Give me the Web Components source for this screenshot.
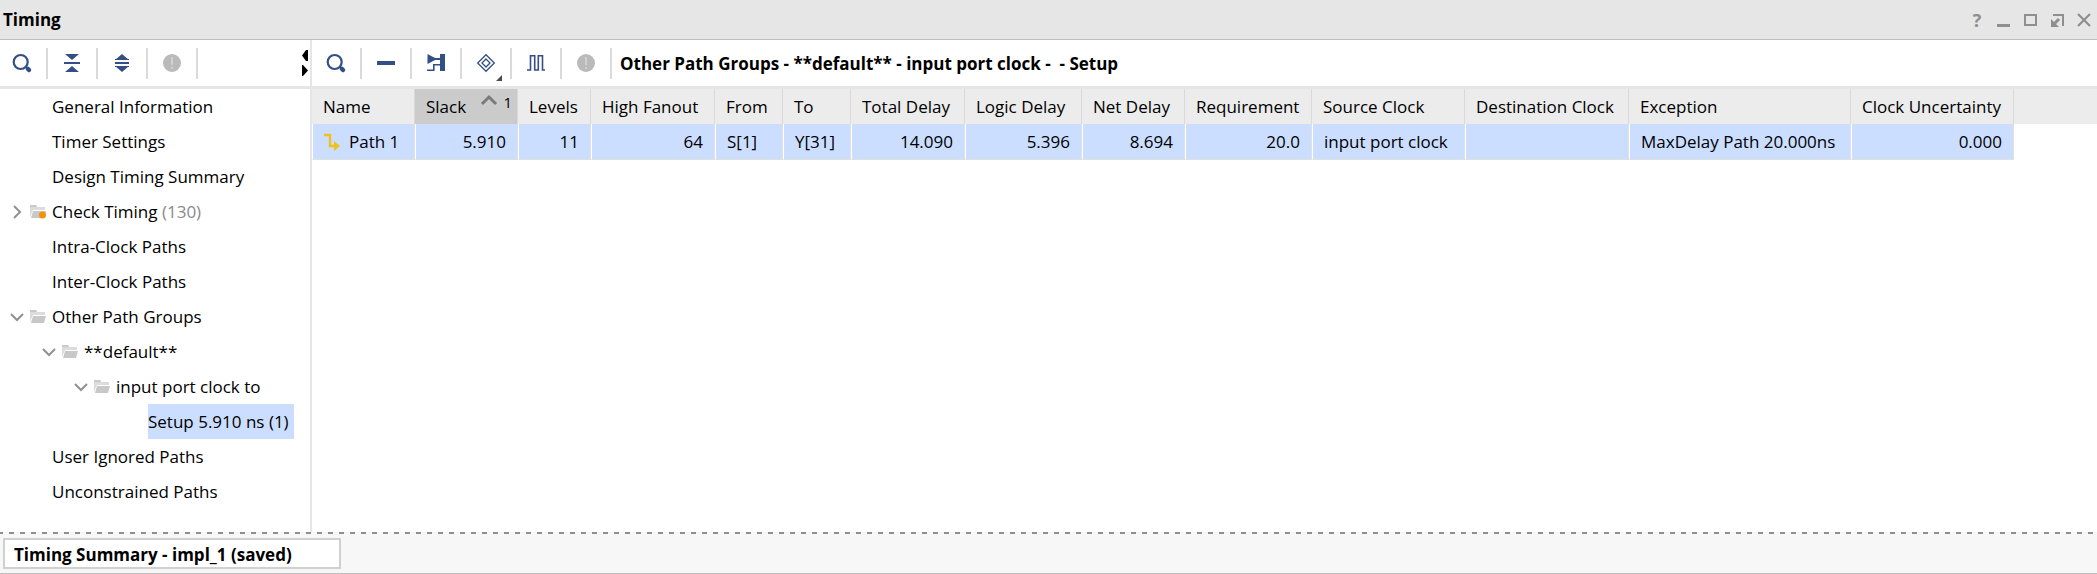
<!DOCTYPE html>
<html lang="en">
<head>
<meta charset="utf-8">
<title>Timing</title>
<style>
  body { margin: 0; background: #fff; color: #000; font: 17px/24px "Open Sans", "Noto Sans", sans-serif; }
</style>
</head>
<body>
<timing-window></timing-window>

<script>
const ICONS = {
  search: '<svg width="20" height="20" viewBox="0 0 20 20"><circle cx="8.700" cy="9" r="7" fill="none" stroke="#334f85" stroke-width="2.200"/><path d="M13.500 13.500l2 2" stroke="#334f85" stroke-width="2"/><path d="M16 16l1 1" stroke="#334f85" stroke-width="4.500" stroke-linecap="round"/></svg>',
  collapse: '<svg width="18" height="20" viewBox="0 0 18 20"><path d="M2 1h14L9 7zM2 19h14l-7-6z" fill="#334f85"/><path d="M1 9h16v2H1z" fill="#334f85"/></svg>',
  expand: '<svg width="18" height="20" viewBox="0 0 18 20"><path d="M2 7l7-6 7 6zM2 13l7 6 7-6z" fill="#334f85"/><path d="M2 9h14v2H2z" fill="#334f85"/><path d="M2 6h14v1H2zM2 13h14v1H2z" fill="#334f85"/></svg>',
  info: '<svg width="20" height="20" viewBox="0 0 20 20"><circle cx="10" cy="10" r="9" fill="#bababa"/><path d="M9 4h2v8H9zM9 14h2v2H9z" fill="#d0d0d0"/></svg>',
  minus: '<svg width="20" height="20" viewBox="0 0 20 20"><path d="M1 8h18v4H1z" fill="#334f85"/></svg>',
  schematic: '<svg width="20" height="20" viewBox="0 0 20 20"><path d="M1.500 1v10L10 6.500V5.500z" fill="#334f85"/><path d="M14 1h5v17h-5z" fill="#334f85"/><path d="M8 6h7" stroke="#334f85" stroke-width="2"/><path d="M1 17.200h6.800v-5.400H14" fill="none" stroke="#334f85" stroke-width="1.600"/></svg>',
  target: '<svg width="20" height="20" viewBox="0 0 20 20" fill="none" stroke="#334f85" stroke-width="1.300"><path d="M10 1.700l8.300 8.300-8.300 8.300L1.700 10z"/><path d="M10 6l4 4-4 4-4-4z"/></svg>',
  wave: '<svg width="20" height="20" viewBox="0 0 20 20"><path d="M1 17h3.500V2.800h4.200V17h3.600V2.800h4.200V17H19" fill="none" stroke="#334f85" stroke-width="1.600"/></svg>',
  folder: '<svg width="16" height="16" viewBox="0 0 16 16"><path d="M0 13V1h6l1 2h8v3H3z" fill="#dcdcdc"/><path d="M3 7h13l-2 7H1z" fill="#c8c8c8"/><path d="M0 1h6l1 2H0z" fill="#c8c8c8"/></svg>',
  folderdot: '<svg width="16" height="16" viewBox="0 0 16 16"><path d="M0 13V1h6l1 2h8v3H3z" fill="#dcdcdc"/><path d="M3 7h13l-2 7H1z" fill="#c8c8c8"/><path d="M0 1h6l1 2H0z" fill="#c8c8c8"/><circle cx="12.500" cy="11" r="3.500" fill="#f79009"/></svg>',
  open: '<svg width="14" height="14" viewBox="0 0 14 14"><path d="M1 4l6 6 6-6" fill="none" stroke="#919191" stroke-width="2"/></svg>',
  closed: '<svg width="14" height="14" viewBox="0 0 14 14"><path d="M4 1l6 6-6 6" fill="none" stroke="#919191" stroke-width="2"/></svg>',
  path: '<svg width="16" height="16" viewBox="0 0 16 16"><path d="M0 1h6v11h6" fill="none" stroke="#eec21b" stroke-width="2.400"/><path d="M10 7l6 5-6 5z" fill="#eec21b"/></svg>',
  sort: '<svg width="16" height="10" viewBox="0 0 16 10"><path d="M1 9l7-7 7 7" fill="none" stroke="#7b7b7b" stroke-width="3"/></svg>',
  help: '<b>?</b>',
  minimize: '<svg width="14" height="14" viewBox="0 0 14 14"><path d="M0 11h13v3H0z" fill="#8f8f8f"/></svg>',
  maximize: '<svg width="14" height="14" viewBox="0 0 14 14"><path d="M1 2h11v10H1z" fill="none" stroke="#8f8f8f" stroke-width="2"/></svg>',
  float: '<svg width="14" height="14" viewBox="0 0 14 14"><path d="M2 2h10v11" fill="none" stroke="#8f8f8f" stroke-width="2"/><path d="M0 6v8h8z" fill="#8f8f8f"/><path d="M3 11l5-5" stroke="#8f8f8f" stroke-width="3"/></svg>',
  close: '<svg width="14" height="14" viewBox="0 0 14 14"><path d="M0 1l12 12M12 1L0 13" stroke="#8f8f8f" stroke-width="2.200"/></svg>'
};

function define(name, render) {
  customElements.define(name, class extends HTMLElement {
    connectedCallback() {
      if (!this.shadowRoot) this.attachShadow({ mode: "open" }).innerHTML = render(this);
    }
  });
}

define("app-icon", el => `
  <style>:host { display: inline-flex; flex: none; } svg { display: block; overflow: visible; }
  b { font-size: 18px; line-height: 14px; color: #8f8f8f; }</style>${ICONS[el.getAttribute("name")]}`);

define("tool-button", el => `
  <style>
    :host { display: block; flex: none; }
    button { position: relative; display: flex; align-items: center; justify-content: center; width: 50px; height: 31px;
      padding: 0; border: 0; border-right: 2px solid #dadada; background: none; }
    :host([edge]) button { width: 48px; padding-right: 2px; }
    :host([menu]) button::after { content: ""; position: absolute; right: 8px; bottom: -2px;
      border: 3px solid transparent; border-right-color: #4c4c4c; border-bottom-color: #4c4c4c; }
  </style>
  <button type="button" aria-label="${el.getAttribute("label")}"><app-icon name="${el.getAttribute("icon")}"></app-icon></button>`);

define("tool-bar", () => `
  <style>:host { display: flex; align-items: center; height: 46px; border-bottom: 3px solid #e6e6e6; }</style><slot></slot>`);

define("split-arrows", () => `
  <style>:host { display: flex; margin-left: auto; padding-right: 2px; } svg { display: block; }</style>
  <svg width="6" height="26" viewBox="0 0 6 26"><path d="M6 0v11H4L0 5.500 4 0zM0 15h1l5 5.500L1 26H0z"/></svg>`);

define("title-bar", el => `
  <style>
    :host { display: flex; align-items: center; height: 39px; padding: 0 5px 0 3px; background: #e6e6e6; border-bottom: 1px solid #bebebe; }
    h1 { margin: 0 auto 0 0; font: inherit; font-weight: 700; }
    div { display: flex; gap: 13px; }
    button { display: flex; align-items: center; justify-content: center; width: 14px; height: 14px; padding: 0; border: 0; background: none; font: inherit; }
  </style>
  <h1><slot></slot></h1>
  <div>${[["help", "Help"], ["minimize", "Minimize"], ["maximize", "Maximize"], ["float", "Float"], ["close", "Close"]]
    .map(([i, l]) => `<button type="button" aria-label="${l}"><app-icon name="${i}"></app-icon></button>`).join("")}</div>`);

define("tree-item", el => {
  const folder = el.getAttribute("folder");
  return `
  <style>
    :host { display: flex; align-items: center; height: 35px; padding-left: calc(10px + 32px * ${el.getAttribute("level") || 0}); white-space: pre; }
    .lead { display: flex; align-items: center; gap: 6px; width: 42px; flex: none; }
    .label { line-height: 35px; }
    :host([selected]) .label { background: #cbdeff; padding-right: 5px; }
    ::slotted(small) { font-size: inherit; color: #8a8a8a; }
  </style>
  <span class="lead">${folder ? `<app-icon name="${el.getAttribute("state")}"></app-icon><app-icon name="${folder}"></app-icon>` : ""}</span>
  <span class="label"><slot></slot></span>`;
});

define("report-tree", () => `
  <style>:host { display: block; }</style>
  <tree-item>General Information</tree-item>
  <tree-item>Timer Settings</tree-item>
  <tree-item>Design Timing Summary</tree-item>
  <tree-item folder="folderdot" state="closed">Check Timing <small>(130)</small></tree-item>
  <tree-item>Intra-Clock Paths</tree-item>
  <tree-item>Inter-Clock Paths</tree-item>
  <tree-item folder="folder" state="open">Other Path Groups</tree-item>
  <tree-item folder="folder" state="open" level="1">**default**</tree-item>
  <tree-item folder="folder" state="open" level="2">input port clock to</tree-item>
  <tree-item level="3" selected>Setup 5.910 ns (1)</tree-item>
  <tree-item>User Ignored Paths</tree-item>
  <tree-item>Unconstrained Paths</tree-item>`);

const COLUMNS = [
  ["Name", 103, "Path 1"], ["Slack", 103, "5.910", 1], ["Levels", 73, "11", 1], ["High Fanout", 124, "64", 1],
  ["From", 68, "S[1]"], ["To", 68, "Y[31]"], ["Total Delay", 114, "14.090", 1], ["Logic Delay", 117, "5.396", 1],
  ["Net Delay", 103, "8.694", 1], ["Requirement", 127, "20.0", 1], ["Source Clock", 153, "input port clock"],
  ["Destination Clock", 164, ""], ["Exception", 222, "MaxDelay Path 20.000ns"], ["Clock Uncertainty", 163, "0.000", 1]
];

define("path-table", () => `
  <style>
    :host { display: block; }
    table { width: 100%; table-layout: fixed; border-spacing: 0; font: inherit; }
    th, td { box-sizing: border-box; height: 35px; padding: 0 11px; text-align: left; font-weight: 400; white-space: nowrap; }
    th { background: #ececec; border-right: 1px solid #d9d9d9; padding-right: 0; }
    th:last-child { border: 0; }
    td { height: 36px; background: #cbdeff; border-left: 1px solid #fff; border-right: 1px solid #e0e0e0; border-bottom: 1px solid #e0e0e0; }
    td.num { text-align: right; }
    td:last-child { background: none; border: 0; }
    th.sorted { background: #cbcbcb; }
    .sort { display: flex; align-items: center; }
    .mark { display: flex; gap: 6px; margin: 0 5px 10px auto; font-size: 15px; line-height: 14px; }
    .path { display: flex; align-items: center; gap: 9px; }
  </style>
  <table>
    <colgroup>${COLUMNS.map(c => `<col style="width:${c[1]}px">`).join("")}<col></colgroup>
    <thead><tr>${COLUMNS.map(c => c[0] === "Slack"
      ? `<th class="sorted" aria-sort="ascending"><div class="sort">Slack<span class="mark"><app-icon name="sort"></app-icon>1</span></div></th>`
      : `<th>${c[0]}</th>`).join("")}<th></th></tr></thead>
    <tbody><tr>${COLUMNS.map((c, i) => i === 0
      ? `<td><div class="path"><app-icon name="path"></app-icon>${c[2]}</div></td>`
      : `<td${c[3] ? ' class="num"' : ""}>${c[2]}</td>`).join("")}<td></td></tr></tbody>
  </table>`);

define("result-tabs", () => `
  <style>
    :host { display: block; border-bottom: 1px solid #bebebe; background: #f7f7f7; }
    .dash { height: 2px; background: repeating-linear-gradient(90deg, #8f8f8f 0 3px, transparent 3px 9px, #8f8f8f 9px 11px); }
    .row { padding: 4px 3px; }
    button { display: block; width: 338px; height: 31px; padding: 2px 9px 0; border: 2px solid #d0d0d0; background: #fff; color: inherit;
      font: inherit; font-weight: 700; text-align: left; }
  </style>
  <div class="dash"></div>
  <div class="row"><button type="button"><slot></slot></button></div>`);

define("timing-window", () => `
  <style>
    :host { display: flex; flex-direction: column; min-height: 100vh; }
    main { display: flex; flex: 1; }
    aside { box-sizing: border-box; flex: none; width: 312px; border-right: 2px solid #e6e6e6; }
    section { flex: 1; min-width: 0; }
    h2 { margin: 0; padding: 2px 0 0 8px; font: inherit; font-weight: 700; white-space: pre; }
  </style>
  <title-bar>Timing</title-bar>
  <main>
    <aside>
      <tool-bar>
        <tool-button edge icon="search" label="Search"></tool-button>
        <tool-button icon="collapse" label="Collapse all"></tool-button>
        <tool-button icon="expand" label="Expand all"></tool-button>
        <tool-button icon="info" label="Messages"></tool-button>
        <split-arrows></split-arrows>
      </tool-bar>
      <report-tree></report-tree>
    </aside>
    <section>
      <tool-bar>
        <tool-button icon="search" label="Search"></tool-button>
        <tool-button icon="minus" label="Collapse"></tool-button>
        <tool-button icon="schematic" label="Schematic"></tool-button>
        <tool-button menu icon="target" label="Mark"></tool-button>
        <tool-button icon="wave" label="Waveform"></tool-button>
        <tool-button icon="info" label="Messages"></tool-button>
        <h2>Other Path Groups - **default** - input port clock -  - Setup</h2>
      </tool-bar>
      <path-table></path-table>
    </section>
  </main>
  <result-tabs>Timing Summary - impl_1 (saved)</result-tabs>`);
</script>
</body>
</html>
